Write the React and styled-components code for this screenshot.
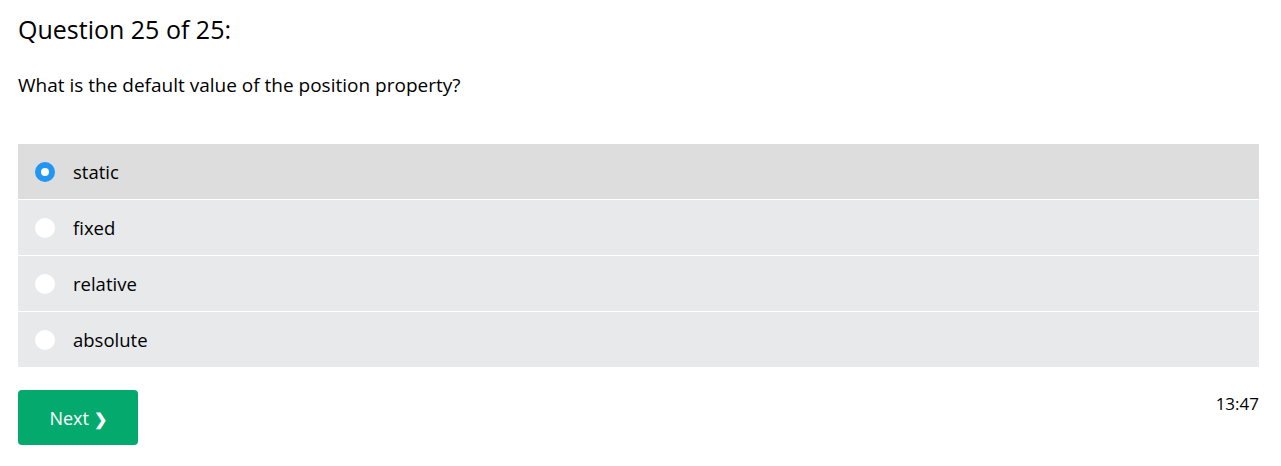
import React, { useState } from 'react';
import styled, { createGlobalStyle } from 'styled-components';

const GlobalStyle = createGlobalStyle`
  html, body {
    margin: 0;
    padding: 0;
    background: #fff;
  }
  body {
    font-family: "Open Sans", "Noto Sans", sans-serif;
    color: #000;
  }
`;

const options = ['static', 'fixed', 'relative', 'absolute'];

const App = () => {
  const [selected, setSelected] = useState(0);

  return (
    <>
      <GlobalStyle />
      <Page>
        <Heading>Question 25 of 25:</Heading>
        <QuestionText>What is the default value of the position property?</QuestionText>
        <OptionList>
          {options.map((opt, i) => (
            <Option key={opt} $active={selected === i} onClick={() => setSelected(i)}>
              <Radio $checked={selected === i} />
              <OptionLabel>{opt}</OptionLabel>
            </Option>
          ))}
        </OptionList>
        <Footer>
          <NextButton>
            Next <Chevron>❯</Chevron>
          </NextButton>
          <Timer>13:47</Timer>
        </Footer>
      </Page>
    </>
  );
};

export default App;

const Page = styled.div`
  padding: 0 22px 0 18px;
`;

const Heading = styled.h2`
  margin: 0;
  padding-top: 12px;
  font-size: 25px;
  font-weight: 400;
  line-height: 34px;
`;

const QuestionText = styled.p`
  margin: 0;
  margin-top: 24px;
  font-size: 19px;
  line-height: 30px;
`;

const OptionList = styled.div`
  display: flex;
  flex-direction: column;
  gap: 1px;
  margin-top: 44px;
`;

const Option = styled.label`
  display: flex;
  align-items: center;
  height: 55px;
  padding-left: 17px;
  background: ${p => (p.$active ? '#dddddd' : '#e7e9eb')};
  cursor: pointer;
`;

const Radio = styled.span`
  box-sizing: border-box;
  width: 20px;
  height: 20px;
  border-radius: 50%;
  background: #fff;
  border: ${p => (p.$checked ? '6px solid #2196f3' : 'none')};
  flex-shrink: 0;
`;

const OptionLabel = styled.span`
  margin-left: 18px;
  font-size: 18.5px;
`;

const Footer = styled.div`
  display: flex;
  justify-content: space-between;
  align-items: flex-start;
  margin-top: 23px;
`;

const NextButton = styled.button`
  width: 120px;
  height: 55px;
  padding: 0;
  border: none;
  border-radius: 4px;
  background: #04aa6d;
  color: #fff;
  font-family: "Open Sans", "Noto Sans", sans-serif;
  font-size: 18px;
  cursor: pointer;
`;

const Chevron = styled.span`
  font-weight: 700;
  font-size: 16px;
`;

const Timer = styled.div`
  margin-top: 2px;
  font-size: 17px;
  line-height: 24px;
`;
